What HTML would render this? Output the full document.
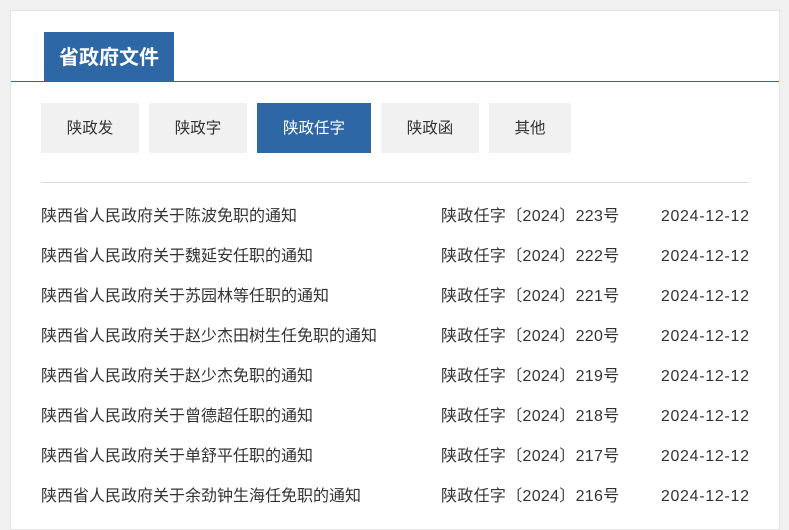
<!DOCTYPE html>
<html><head><meta charset="utf-8"><style>
*{margin:0;padding:0;box-sizing:border-box}
body{width:789px;height:518px;background:#f0f0f0;overflow:hidden;font-family:"Liberation Sans","Noto Sans CJK SC",sans-serif;}
.panel{position:absolute;left:10px;top:10px;width:770px;height:520px;background:#fff;border:1px solid #e4e4e4;}
.tab{position:absolute;left:33px;top:21px;width:130px;height:50px;background:#2d67a6;color:#fff;font-size:20px;font-weight:bold;line-height:52px;text-align:center;}
.hline{position:absolute;left:0;top:70px;width:768px;height:1px;background:#2d67a6;}
.btn{position:absolute;top:92px;height:50px;background:#f1f1f1;color:#333;font-size:15.5px;line-height:51px;text-align:center;}
.btn.on{background:#2d67a6;color:#fff}
.div{position:absolute;left:30px;top:171px;width:708px;height:1px;background:#ddd}
.row{position:absolute;left:30px;width:708px;height:20px;font-size:16px;color:#333;line-height:20px}
.row .n{position:absolute;left:400px;letter-spacing:0.3px}
.row .d{position:absolute;right:0;letter-spacing:0.7px;margin-right:-0.7px}
</style></head><body>
<div class="panel">
<div class="tab">省政府文件</div>
<div class="hline"></div>
<div class="btn" style="left:30px;width:98px">陕政发</div>
<div class="btn" style="left:138px;width:98px">陕政字</div>
<div class="btn on" style="left:246px;width:114px">陕政任字</div>
<div class="btn" style="left:370px;width:98px">陕政函</div>
<div class="btn" style="left:478px;width:82px">其他</div>
<div class="div"></div>
<div class="row" style="top:196px">陕西省人民政府关于陈波免职的通知<span class="n">陕政任字〔2024〕223号</span><span class="d">2024-12-12</span></div>
<div class="row" style="top:236px">陕西省人民政府关于魏延安任职的通知<span class="n">陕政任字〔2024〕222号</span><span class="d">2024-12-12</span></div>
<div class="row" style="top:276px">陕西省人民政府关于苏园林等任职的通知<span class="n">陕政任字〔2024〕221号</span><span class="d">2024-12-12</span></div>
<div class="row" style="top:316px">陕西省人民政府关于赵少杰田树生任免职的通知<span class="n">陕政任字〔2024〕220号</span><span class="d">2024-12-12</span></div>
<div class="row" style="top:356px">陕西省人民政府关于赵少杰免职的通知<span class="n">陕政任字〔2024〕219号</span><span class="d">2024-12-12</span></div>
<div class="row" style="top:396px">陕西省人民政府关于曾德超任职的通知<span class="n">陕政任字〔2024〕218号</span><span class="d">2024-12-12</span></div>
<div class="row" style="top:436px">陕西省人民政府关于单舒平任职的通知<span class="n">陕政任字〔2024〕217号</span><span class="d">2024-12-12</span></div>
<div class="row" style="top:476px">陕西省人民政府关于余劲钟生海任免职的通知<span class="n">陕政任字〔2024〕216号</span><span class="d">2024-12-12</span></div>
</div>
</body></html>
